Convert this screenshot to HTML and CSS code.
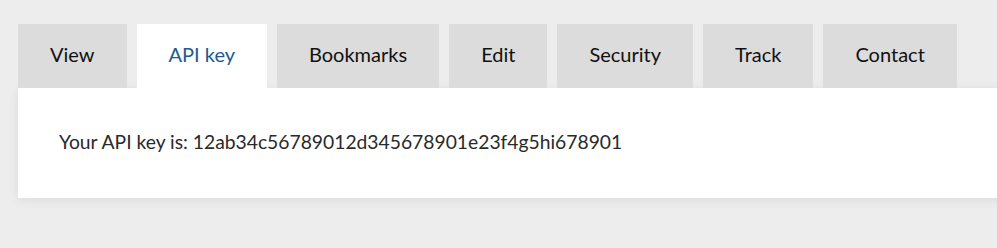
FILE: index.html
```html
<!DOCTYPE html>
<html lang="en">
<head>
    <meta charset="UTF-8">
    <meta name="viewport" content="width=device-width, initial-scale=1.0">
    <title>Account</title>
    <link rel="stylesheet" href="styles.css">
</head>
<body>
    <div class="account">
        <ul class="tabs">
            <li class="tab">View</li>
            <li class="tab active">API key</li>
            <li class="tab">Bookmarks</li>
            <li class="tab">Edit</li>
            <li class="tab">Security</li>
            <li class="tab">Track</li>
            <li class="tab">Contact</li>
        </ul>
        <div class="panel">
            <p class="api-key">Your API key is: 12ab34c56789012d345678901e23f4g5hi678901</p>
        </div>
    </div>
</body>
</html>
```

FILE: styles.css
```css
html, body { overflow-x: hidden; }
body {
    margin: 0;
    background: #ededed;
    font-family: Lato, "Open Sans", Arial, sans-serif;
    color: #222;
}
.account {
    width: 1000px;
    padding: 24px 0 50px 18px;
}
.tabs {
    display: flex;
    gap: 10px;
    margin: 0;
    padding: 0;
    list-style: none;
}
.tab {
    height: 64px;
    line-height: 61px;
    padding: 0 32px;
    background: #dcdcdc;
    font-size: 20px;
    color: #111;
    text-align: center;
}
.tab.active {
    background: #fff;
    color: #1d5b8f;
    position: relative;
    z-index: 1;
}
.panel {
    height: 110px;
    background: #fff;
    box-shadow: 0 2px 10px rgba(0, 0, 0, 0.08);
    padding: 0 41px;
    box-sizing: border-box;
}
.api-key {
    margin: 0;
    padding-top: 42px;
    font-size: 19.3px;
    line-height: 24px;
    color: #2a2a2a;
}
```
